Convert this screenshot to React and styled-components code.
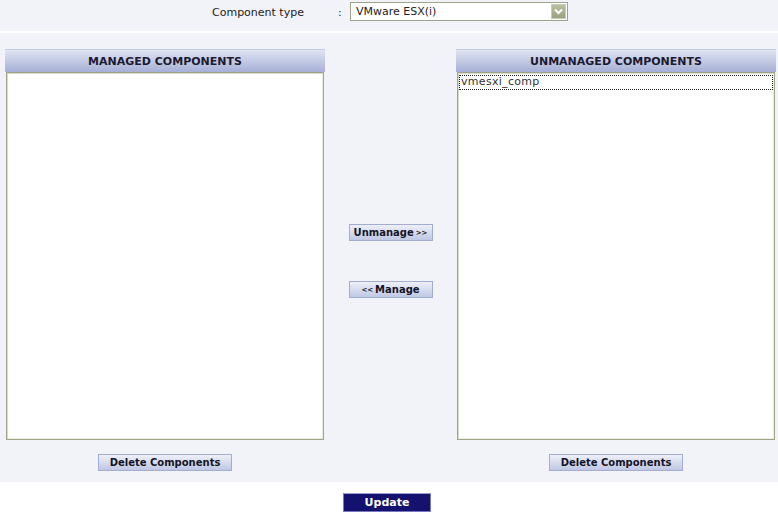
import React from "react";
import styled, { createGlobalStyle } from "styled-components";

const Global = createGlobalStyle`
  html, body {
    margin: 0;
    padding: 0;
    background: #ffffff;
    font-family: "DejaVu Sans", Verdana, sans-serif;
    font-size: 11px;
    color: #222;
  }
`;

const Page = styled.div`
  width: 778px;
  height: 514px;
  background: #fff;
`;

const TopBar = styled.div`
  height: 31px;
  background: #f2f3f8;
  border-bottom: 2px solid #ffffff;
  display: flex;
  align-items: flex-start;
`;

const Label = styled.div`
  padding-left: 212px;
  padding-top: 6px;
  box-sizing: border-box;
  width: 338px;
  color: #222;
`;

const Colon = styled.div`
  width: 12px;
  padding-top: 6px;
  color: #222;
`;

const Select = styled.div`
  margin-top: 2px;
  width: 218px;
  height: 19px;
  box-sizing: border-box;
  border: 1px solid #9da48a;
  background: #fff;
  display: flex;
  align-items: center;
  justify-content: space-between;
  padding-left: 5px;
  padding-right: 1px;
`;

const ArrowBox = styled.div`
  width: 15px;
  height: 15px;
  background: linear-gradient(#b8bf9f, #9aa27f);
  border: 1px solid #c9cdb8;
  box-sizing: border-box;
  display: flex;
  align-items: center;
  justify-content: center;
`;

const Main = styled.div`
  height: 449px;
  background: #f2f3f8;
  display: grid;
  grid-template-columns: 320px 131px 320px;
  padding-left: 5px;
  padding-top: 16px;
  box-sizing: border-box;
`;

const Panel = styled.div`
  display: flex;
  flex-direction: column;
  align-items: center;
`;

const PanelHead = styled.div`
  width: 100%;
  height: 23px;
  background: linear-gradient(#dfe4f1, #a6b0d6);
  border-top: 1px solid #c4cbe2;
  box-sizing: border-box;
  display: flex;
  align-items: center;
  justify-content: center;
  font-weight: bold;
  font-size: 11px;
  color: #1c1a30;
`;

const ListBox = styled.div`
  align-self: ${(p) => (p.$right ? "flex-end" : "flex-start")};
  margin-left: ${(p) => (p.$right ? "0" : "1px")};
  margin-right: ${(p) => (p.$right ? "1px" : "0")};
  width: 318px;
  height: 368px;
  box-sizing: border-box;
  background: #fff;
  border: 1px solid #9ea38a;
  box-shadow: inset 1px 1px 0 #d8dacb, inset -1px -1px 0 #ececdf;
  padding: 2px 1px;
`;

const Option = styled.div`
  height: 13px;
  line-height: 12px;
  padding-left: 1px;
  border: 1px dotted #222;
  color: #333;
  font-size: 11px;
  letter-spacing: 0.3px;
`;

const Middle = styled.div`
  display: flex;
  flex-direction: column;
  align-items: center;
  padding-top: 175px;
  gap: 40px;
`;

const Button = styled.button`
  width: ${(p) => p.$w}px;
  height: 17px;
  padding: 0;
  border: 1px solid #a3acd2;
  background: linear-gradient(#eef0f8, #bfc7e3);
  font-family: "DejaVu Sans", Verdana, sans-serif;
  font-weight: bold;
  font-size: 10px;
  color: #141428;
  display: flex;
  align-items: center;
  justify-content: center;
  gap: 2px;
  cursor: pointer;
`;

const Small = styled.span`
  font-size: 7px;
`;

const DeleteRow = styled.div`
  margin-top: 14px;
  display: flex;
  justify-content: center;
  width: 100%;
`;

const Footer = styled.div`
  display: flex;
  justify-content: center;
  padding-top: 11px;
  padding-right: 4px;
`;

const UpdateButton = styled.button`
  width: 88px;
  height: 19px;
  padding: 0;
  background: #14126e;
  border: 1px solid #7a7ac0;
  border-top-color: #9c9cd6;
  color: #fff;
  font-family: "DejaVu Sans", Verdana, sans-serif;
  font-weight: bold;
  font-size: 11px;
  cursor: pointer;
`;

const Chevron = () => (
  <svg width="9" height="7" viewBox="0 0 9 7">
    <path d="M1 1.5 L4.5 5 L8 1.5" fill="none" stroke="#fff" strokeWidth="2" />
  </svg>
);

export default function App() {
  return (
    <Page>
      <Global />
      <TopBar>
        <Label>Component type</Label>
        <Colon>:</Colon>
        <Select>
          <span>VMware ESX(i)</span>
          <ArrowBox>
            <Chevron />
          </ArrowBox>
        </Select>
      </TopBar>
      <Main>
        <Panel>
          <PanelHead>MANAGED COMPONENTS</PanelHead>
          <ListBox />
          <DeleteRow>
            <Button $w={134}>Delete Components</Button>
          </DeleteRow>
        </Panel>
        <Middle>
          <Button $w={84}>
            Unmanage<Small>&gt;&gt;</Small>
          </Button>
          <Button $w={84}>
            <Small>&lt;&lt;</Small> Manage
          </Button>
        </Middle>
        <Panel>
          <PanelHead>UNMANAGED COMPONENTS</PanelHead>
          <ListBox $right>
            <Option>vmesxi_comp</Option>
          </ListBox>
          <DeleteRow>
            <Button $w={134}>Delete Components</Button>
          </DeleteRow>
        </Panel>
      </Main>
      <Footer>
        <UpdateButton>Update</UpdateButton>
      </Footer>
    </Page>
  );
}
